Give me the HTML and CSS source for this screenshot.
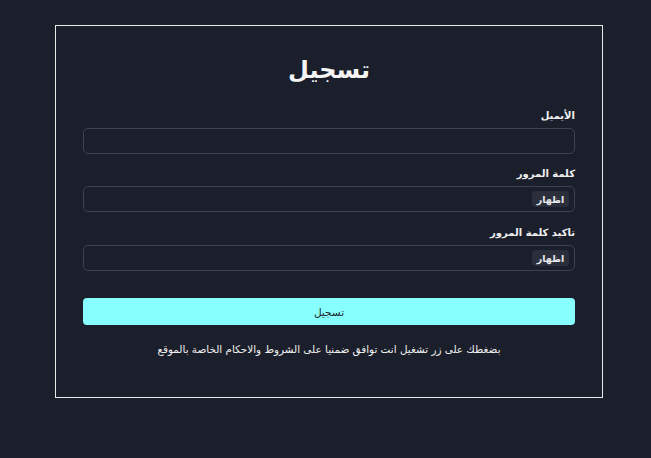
FILE: index.html
```html
<!DOCTYPE html>
<html lang="ar" dir="rtl">
<head>
<meta charset="utf-8">
<link rel="stylesheet" href="styles.css">
</head>
<body>
<div class="card">
  <h1 class="title">تسجيل</h1>
  <form class="form">
    <label class="label">الأيميل</label>
    <div class="field"><input class="input" type="email"></div>
    <label class="label">كلمة المرور</label>
    <div class="field"><input class="input" type="password"><button type="button" class="show">اظهار</button></div>
    <label class="label label-last">تاكيد كلمة المرور</label>
    <div class="field"><input class="input" type="password"><button type="button" class="show">اظهار</button></div>
    <button type="button" class="submit">تسجيل</button>
    <p class="note">بضغطك على زر تشغيل انت توافق ضمنيا على الشروط والاحكام الخاصة بالموقع</p>
  </form>
</div>
</body>
</html>
```
FILE: styles.css
```css
html, body { margin: 0; padding: 0; }
body {
  background: #1b1f2b;
  color: #f1f1f1;
  font-family: "DejaVu Sans", sans-serif;
  height: 458px;
  overflow: hidden;
}
.card {
  box-sizing: border-box;
  width: 548px;
  height: 373px;
  margin: 25px 48px 0 0;
  border: 1px solid #e8e8e8;
  padding: 0 27px;
}
.title {
  margin: 24px 0 0;
  text-align: center;
  font-size: 24px;
  font-weight: bold;
  line-height: 40px;
  color: #f4f4f4;
}
.form { display: flex; flex-direction: column; margin-top: 18px; }
.label {
  font-size: 10px;
  font-weight: bold;
  line-height: 16px;
  margin-bottom: 4px;
  color: #f0f0f0;
}
.label-last { margin-top: 1px; }
.field {
  height: 26px;
  box-sizing: border-box;
  border: 1px solid #3d424d;
  border-radius: 5px;
  margin-bottom: 12px;
  display: flex;
  align-items: center;
  padding: 0 5px;
}
.input {
  flex: 1;
  background: transparent;
  border: 0;
  outline: none;
  height: 22px;
  color: #fff;
  min-width: 0;
}
.show {
  order: -1;
  background: #2b2f3b;
  border: 0;
  border-radius: 4px;
  color: #e8e8ee;
  font-family: "DejaVu Sans", sans-serif;
  font-weight: bold;
  font-size: 9.5px;
  height: 16px;
  width: 37px;
  padding: 0;
}
.submit {
  margin-top: 15px;
  height: 27px;
  border: 0;
  border-radius: 4px;
  background: #88ffff;
  color: #1b1f2b;
  font-family: "DejaVu Sans", sans-serif;
  font-size: 10.5px;
}
.note {
  margin: 16px 0 0;
  text-align: center;
  font-size: 10.4px;
  line-height: 16px;
  color: #f0f0f0;
}
```
